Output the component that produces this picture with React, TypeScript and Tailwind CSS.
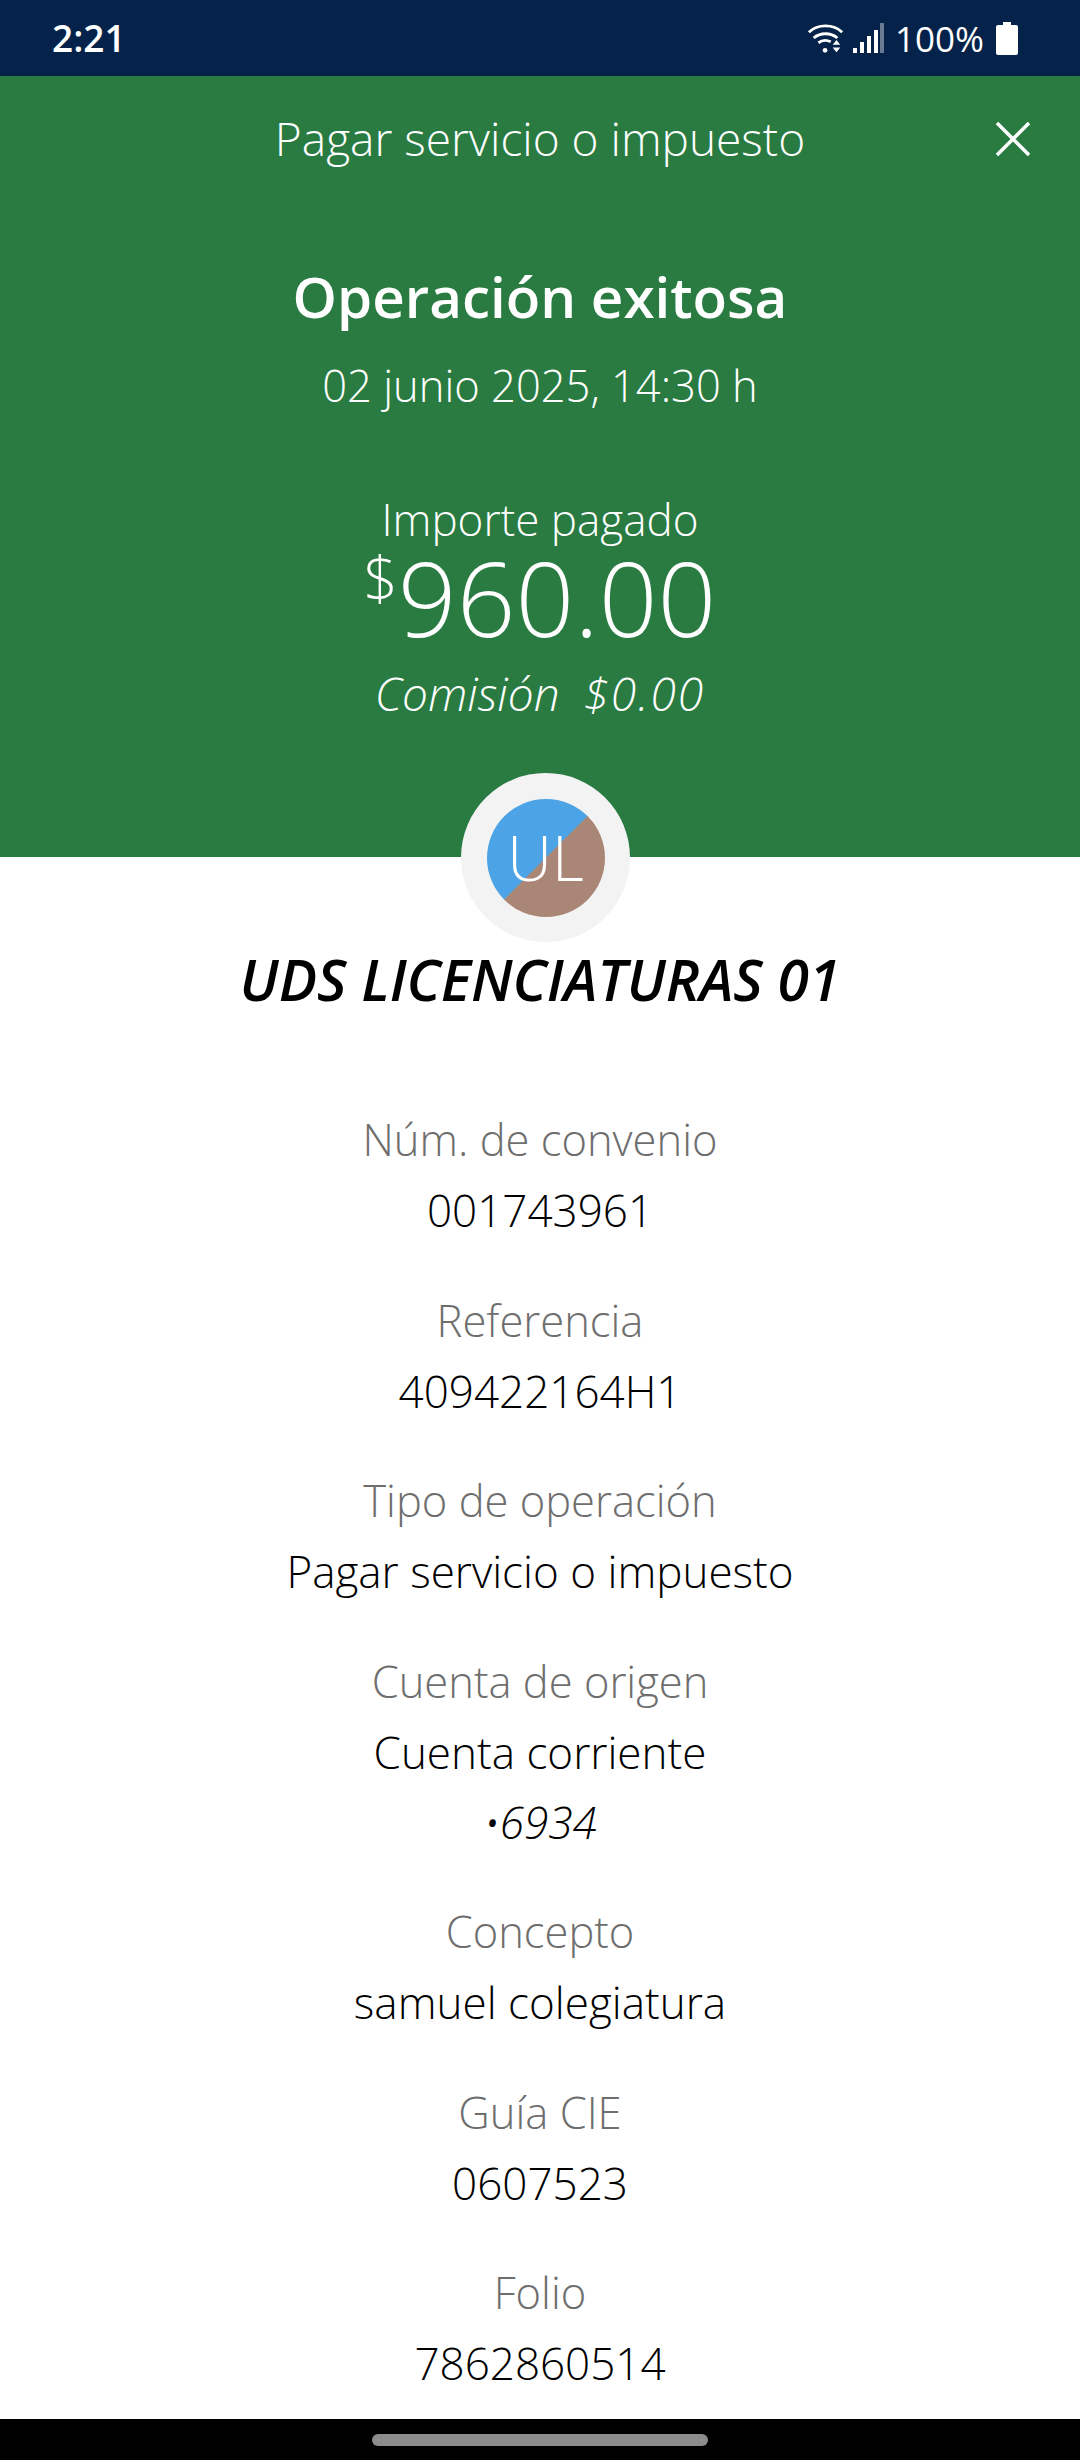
const details = [
  { label: "Núm. de convenio", value: "001743961" },
  { label: "Referencia", value: "409422164H1" },
  { label: "Tipo de operación", value: "Pagar servicio o impuesto" },
  { label: "Cuenta de origen", value: "Cuenta corriente", account: "•6934" },
  { label: "Concepto", value: "samuel colegiatura" },
  { label: "Guía CIE", value: "0607523" },
  { label: "Folio", value: "7862860514" },
];

function StatusIcons() {
  return (
    <div className="flex items-center">
      <svg width="38" height="34" viewBox="0 0 40 34" fill="none" className="text-white">
        <path d="M2 11C11 2 28 2 37 11" stroke="currentColor" strokeWidth="3" />
        <path d="M7 17C14 11 25 11 32 17" stroke="currentColor" strokeWidth="3" />
        <path d="M12 22C16 19 21 19 25 21" stroke="currentColor" strokeWidth="3" />
        <circle cx="19" cy="30" r="2.5" fill="currentColor" />
        <path d="M31 19l4 5h-8zM31 32l4-5h-8z" fill="currentColor" />
      </svg>
      <svg width="32" height="32" viewBox="0 0 32 32" className="ml-[7px]">
        <rect x="1" y="26" width="4" height="5" fill="#fff" />
        <rect x="8" y="20" width="4" height="11" fill="#fff" />
        <rect x="15" y="14" width="4" height="17" fill="#fff" />
        <rect x="22" y="8" width="4" height="23" fill="#fff" />
        <rect x="28" y="1" width="4" height="30" fill="#fff" opacity="0.4" />
      </svg>
      <span className="ml-[11px] text-[35px] font-medium leading-none text-white">100%</span>
      <svg width="22" height="33" viewBox="0 0 22 33" className="ml-[12px]">
        <path d="M7 0h8v3h5a2 2 0 0 1 2 2v26a2 2 0 0 1-2 2H2a2 2 0 0 1-2-2V5a2 2 0 0 1 2-2h5z" fill="#fff" />
      </svg>
    </div>
  );
}

export default function App() {
  return (
    <div className="flex h-[2460px] w-[1080px] flex-col overflow-hidden bg-white font-['Open_Sans',sans-serif] text-black">
      <div className="flex h-[76px] shrink-0 items-center justify-between bg-[#05224a] pl-[52px] pr-[62px]">
        <span className="text-[37px] font-semibold text-white">2:21</span>
        <StatusIcons />
      </div>

      <div className="relative flex h-[781px] shrink-0 flex-col items-center bg-[#297b41] text-white">
        <div className="mt-[34px] text-[46px] font-light leading-[56px]">Pagar servicio o impuesto</div>
        <svg width="36" height="36" viewBox="0 0 36 36" className="absolute left-[995px] top-[45px]">
          <path d="M2 2l32 32M34 2L2 34" stroke="#fff" strokeWidth="3.5" />
        </svg>
        <div className="mt-[95px] text-[56.5px] font-semibold leading-[72px]">Operación exitosa</div>
        <div className="mt-[25px] text-[43.5px] font-light leading-[56px]">02 junio 2025, 14:30 h</div>
        <div className="mt-[77px] text-[44px] font-light leading-[56px]">Importe pagado</div>
        <div className="flex items-start">
          <span className="-mt-[1px] text-[60px] font-light leading-[64px]">$</span>
          <span className="text-[103px] font-light leading-[100px]">960.00</span>
        </div>
        <div className="mt-[18px] text-[46px] font-light italic leading-[56px]">
          Comisión&nbsp;&nbsp;<span className="tracking-[2px]">$0.00</span>
        </div>
        <div className="absolute left-[461px] top-[697px] flex h-[169px] w-[169px] items-center justify-center rounded-full bg-[#f3f3f3]">
          <div className="flex h-[118px] w-[118px] items-center justify-center rounded-full bg-[linear-gradient(135deg,#4ca3e6_50%,#a98676_50%)] text-[62px] font-light text-white">
            UL
          </div>
        </div>
      </div>

      <div className="mt-[90px] text-center text-[57px] font-semibold italic leading-[64px]">UDS LICENCIATURAS 01</div>

      <div className="mt-[94px] flex min-h-0 flex-1 flex-col items-center overflow-hidden">
        {details.map((row) => (
          <div key={row.label} className="mb-[40.5px] flex flex-col items-center text-[44px] font-light leading-[70px]">
            <div className="text-[43.5px] text-[#6e6e6e]">{row.label}</div>
            <div>{row.value}</div>
            {row.account && <div className="italic">{row.account}</div>}
          </div>
        ))}
      </div>

      <div className="flex h-[41px] shrink-0 items-center justify-center bg-black">
        <div className="h-[12px] w-[336px] rounded-full bg-[#8c8c8c]" />
      </div>
    </div>
  );
}
